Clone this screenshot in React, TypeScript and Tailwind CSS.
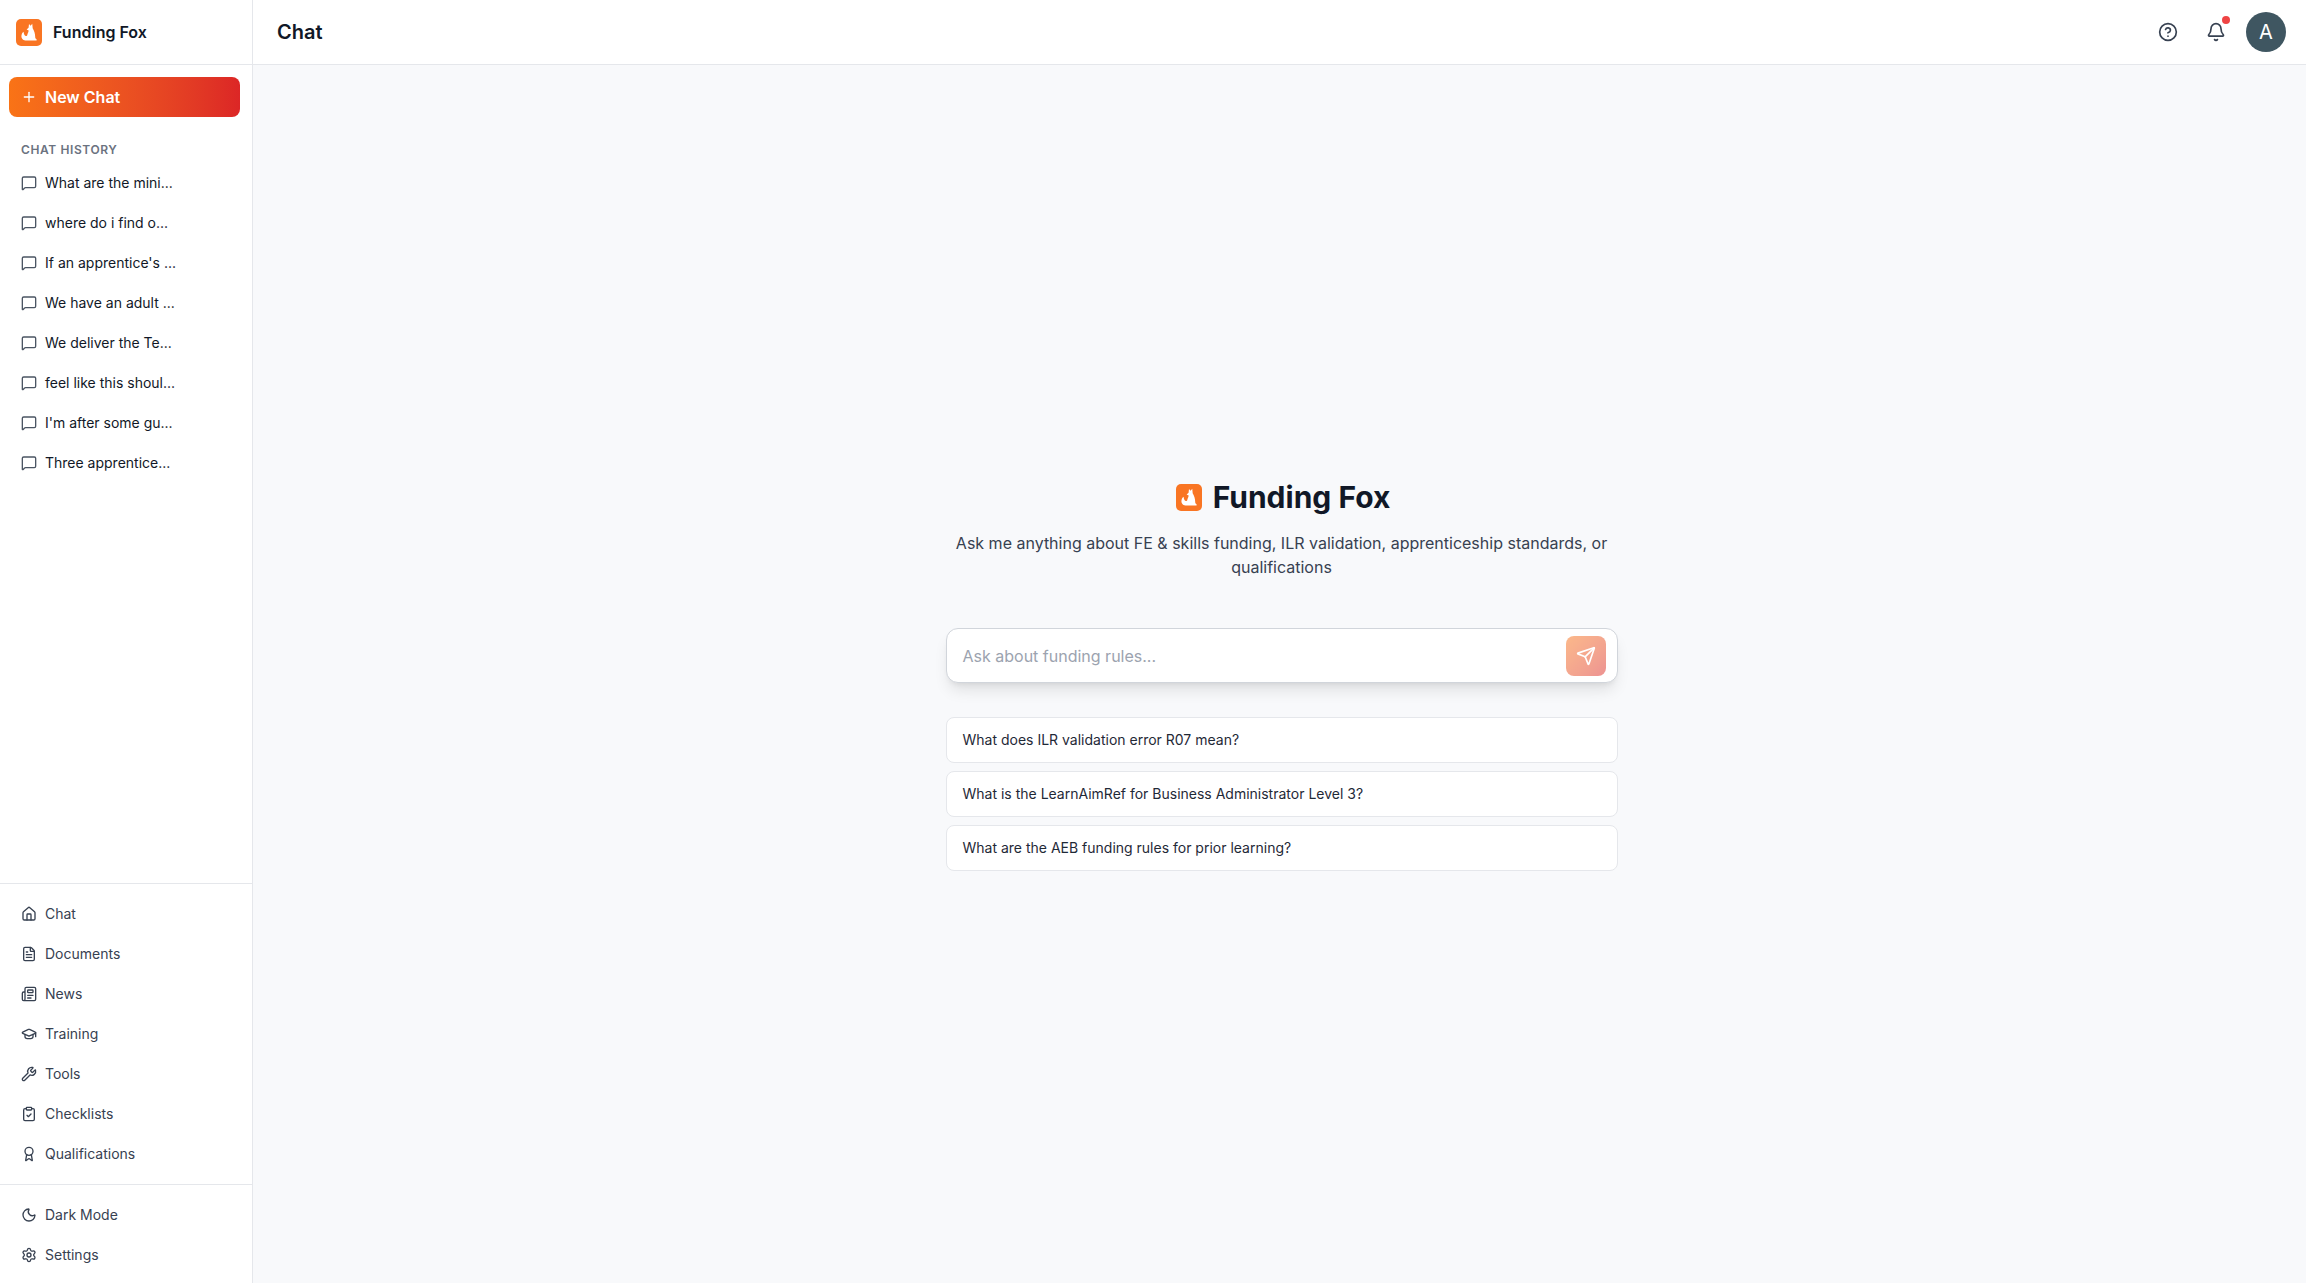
import { Award, Bell, CircleHelp, ClipboardCheck, FileText, GraduationCap, House, MessageSquare, Moon, Newspaper, Plus, Send, Settings, Wrench } from 'lucide-react';

const history = [
  'What are the mini...',
  'where do i find o...',
  "If an apprentice's ...",
  'We have an adult ...',
  'We deliver the Te...',
  'feel like this shoul...',
  "I'm after some gu...",
  'Three apprentice...',
];

const navItems = [
  { label: 'Chat', icon: House },
  { label: 'Documents', icon: FileText },
  { label: 'News', icon: Newspaper },
  { label: 'Training', icon: GraduationCap },
  { label: 'Tools', icon: Wrench },
  { label: 'Checklists', icon: ClipboardCheck },
  { label: 'Qualifications', icon: Award },
];

const bottomItems = [
  { label: 'Dark Mode', icon: Moon },
  { label: 'Settings', icon: Settings },
];

const suggestions = [
  'What does ILR validation error R07 mean?',
  'What is the LearnAimRef for Business Administrator Level 3?',
  'What are the AEB funding rules for prior learning?',
];

function FoxLogo() {
  return (
    <div className="flex h-[27px] w-[26px] shrink-0 items-center justify-center rounded-[5px] bg-[#f97523]">
      <svg viewBox="0 0 24 24" className="h-full w-full" fill="white">
        <path d="M12 4.2 13.4 5.8 15 4 15.4 8C16.8 10.4 17.7 13 17.7 15.8 17.7 17 18 17.8 19 18.2V19.4H9.6C7 19.4 5 17.8 5 15.4 5 13.6 5.8 12 7 11.2 7.2 13 7.8 14.6 9 15.2 9.8 15.6 10.2 15 10.4 14.2 10.7 12.8 11.6 11.6 11.7 10.2L9.8 9.2 11.6 7.6Z" />
      </svg>
    </div>
  );
}

export default function App() {
  return (
    <div className="flex h-[1283px] w-full bg-[#f8f9fb] font-['Inter',sans-serif] text-[#111827]">
      {/* Sidebar */}
      <aside className="flex w-[253px] shrink-0 flex-col border-r border-[#e5e7eb] bg-white">
        <div className="flex h-[65px] shrink-0 items-center gap-[11px] border-b border-[#e5e7eb] pl-4">
          <FoxLogo />
          <span className="text-base font-semibold">Funding Fox</span>
        </div>

        <div className="flex flex-1 flex-col px-[9px] pt-3">
          <button className="flex h-10 w-[231px] items-center gap-2 rounded-lg bg-gradient-to-r from-[#f97316] to-[#dc2626] px-3 text-base font-semibold text-white">
            <Plus size={16} />
            New Chat
          </button>

          <div className="mt-[25px] px-3 text-xs font-semibold tracking-wider text-[#6b7280]">CHAT HISTORY</div>
          <div className="mt-[5px]">
            {history.map((title) => (
              <div key={title} className="flex h-10 items-center gap-2 px-3 text-sm text-[#111827]">
                <MessageSquare size={16} className="shrink-0 text-[#4b5563]" />
                <span>{title}</span>
              </div>
            ))}
          </div>
        </div>

        <nav className="border-t border-[#e5e7eb] px-[9px] py-[10px]">
          {navItems.map(({ label, icon: Icon }) => (
            <div key={label} className="flex h-10 items-center gap-2 px-3 text-sm text-[#374151]">
              <Icon size={16} className="shrink-0" />
              {label}
            </div>
          ))}
        </nav>

        <div className="border-t border-[#e5e7eb] px-[9px] pt-[10px] pb-2">
          {bottomItems.map(({ label, icon: Icon }) => (
            <div key={label} className="flex h-10 items-center gap-2 px-3 text-sm text-[#374151]">
              <Icon size={16} className="shrink-0" />
              {label}
            </div>
          ))}
        </div>
      </aside>

      {/* Main */}
      <main className="flex min-w-0 flex-1 flex-col">
        <header className="flex h-[65px] shrink-0 items-center justify-between border-b border-[#e5e7eb] bg-white pr-5 pl-6">
          <h1 className="text-xl font-semibold">Chat</h1>
          <div className="flex items-center">
            <CircleHelp size={20} className="text-[#374151]" />
            <div className="relative ml-7">
              <Bell size={20} className="text-[#374151]" />
              <span className="absolute -top-[6px] -right-[4px] h-2 w-2 rounded-full bg-[#ef4444]" />
            </div>
            <div className="ml-5 flex h-10 w-10 items-center justify-center rounded-full bg-[#3f5661] text-xl text-white">A</div>
          </div>
        </header>

        <div className="flex flex-1 items-center justify-center pt-[2px] pl-1">
          <div className="w-[672px]">
            <div className="flex items-center justify-center gap-[11px] pl-[3px]">
              <FoxLogo />
              <h2 className="text-3xl font-bold">Funding Fox</h2>
            </div>
            <p className="mt-4 text-center text-base text-[#374151]">
              Ask me anything about FE &amp; skills funding, ILR validation, apprenticeship standards, or qualifications
            </p>

            <div className="mt-[49px] flex h-[55px] items-center justify-between rounded-xl border border-[#d1d5db] bg-white pr-[11px] pl-4 shadow-lg">
              <span className="text-base text-[#9ca3af]">Ask about funding rules...</span>
              <button className="flex h-10 w-10 items-center justify-center rounded-lg bg-gradient-to-br from-[#f97316] to-[#dc2626] text-white opacity-50">
                <Send size={20} />
              </button>
            </div>

            <div className="mt-[34px] flex flex-col gap-2">
              {suggestions.map((text) => (
                <button key={text} className="h-[46px] rounded-lg border border-[#e5e7eb] bg-white px-4 text-left text-sm text-[#1f2937]">
                  {text}
                </button>
              ))}
            </div>
          </div>
        </div>
      </main>
    </div>
  );
}
